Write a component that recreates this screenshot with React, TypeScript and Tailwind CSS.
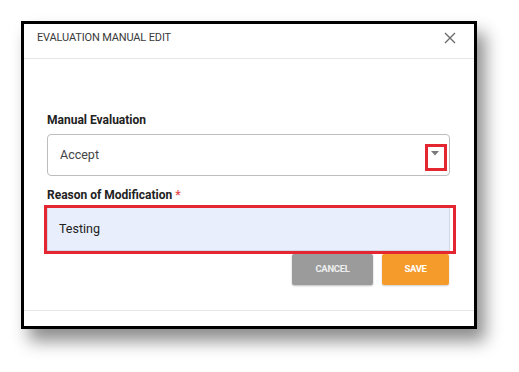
import React from "react";

export default function App() {
  return (
    <div className="w-[519px] h-[372px] bg-white relative overflow-hidden" style={{ fontFamily: "Roboto, 'Liberation Sans', sans-serif" }}>
      <div className="absolute left-[21px] top-[21px] w-[456px] h-[308px] border-[3px] border-black bg-white shadow-[8px_12px_16px_rgba(0,0,0,0.45)] flex flex-col">
        {/* header */}
        <div className="h-[35px] border-b border-[#e6e6e6] flex items-start justify-between pl-[13px] pr-[18px] pt-[7px]">
          <span className="text-[11px] leading-[13px] text-[#3a3a3a] tracking-[-0.15px]">EVALUATION MANUAL EDIT</span>
          <svg width="12" height="12" viewBox="0 0 12 12" className="mt-[1px]">
            <path d="M1 1 L11 11 M11 1 L1 11" stroke="#6b6b6b" strokeWidth="1.4" />
          </svg>
        </div>
        {/* body */}
        <div className="flex flex-col pl-[23px] pr-[24px] pt-[54px] h-[252px] border-b border-[#e6e6e6]">
          <div className="text-[12px] leading-[14px] font-bold text-[#222]">Manual Evaluation</div>
          <div className="relative mt-[7px] h-[42px] border border-[#bdbdbd] rounded-[4px] flex items-center pl-[12px]">
            <span className="text-[12.5px] text-[#444]">Accept</span>
            <div className="absolute right-[9px] top-[13px] w-[10px] h-[10px] flex items-center justify-center">
              <svg width="8" height="5" viewBox="0 0 8 5"><path d="M0 0 L8 0 L4 4.5 Z" fill="#7a7a7a" /></svg>
            </div>
            <div className="absolute right-[2px] top-[9px] w-[22px] h-[27px] border-[3px] border-[#e3262f]" />
          </div>
          <div className="mt-[12px] text-[12px] leading-[14px] font-bold text-[#222]">
            Reason of Modification <span className="text-[#e34b4b]">*</span>
          </div>
          <div className="relative mt-[5px] h-[44px] border border-[#cfd6e4] bg-[#e8eefb] flex items-center pl-[11px]">
            <span className="text-[12.5px] text-[#222]">Testing</span>
            <div className="absolute -left-[4px] -top-[3px] -right-[7px] -bottom-[4px] border-[3px] border-[#e3262f]" />
          </div>
          <div className="mt-[3px] flex justify-end gap-[9px] pr-[1px]">
            <div className="w-[81px] h-[31px] bg-[#9b9b9b] rounded-[2px] shadow-[0_1px_2px_rgba(0,0,0,0.25)] flex items-center justify-center text-[9.5px] font-bold text-[#eeeeee] tracking-[-0.3px]">CANCEL</div>
            <div className="w-[67px] h-[31px] bg-[#f59b2c] rounded-[2px] shadow-[0_1px_2px_rgba(0,0,0,0.2)] flex items-center justify-center text-[9.5px] font-bold text-white tracking-[-0.3px]">SAVE</div>
          </div>
        </div>
      </div>
    </div>
  );
}
